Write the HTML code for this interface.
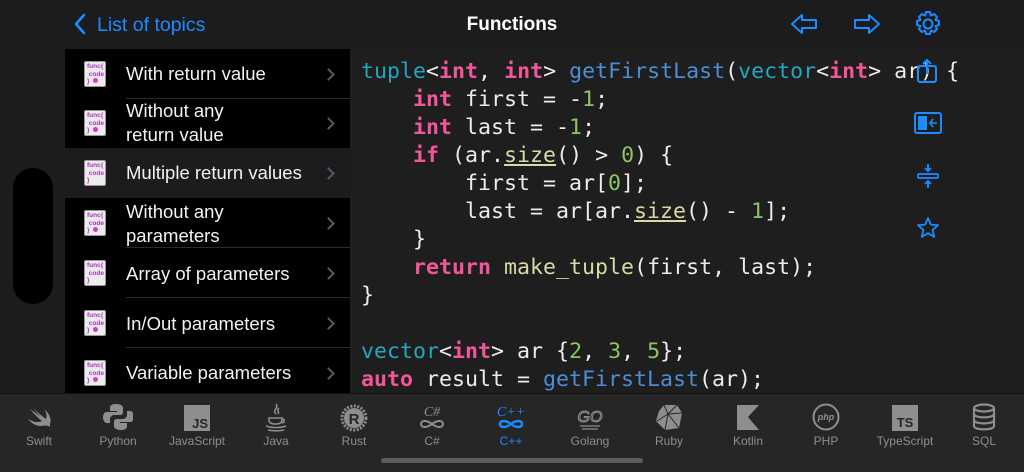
<!DOCTYPE html>
<html><head><meta charset="utf-8"><style>
*{margin:0;padding:0;box-sizing:border-box}
body{width:1024px;height:472px;overflow:hidden;background:#1c1c1e;font-family:"Liberation Sans",sans-serif;position:relative;color:#fff}
.top{position:absolute;left:0;top:0;width:1024px;height:49px;background:#1c1c1e}
.back{position:absolute;left:74px;top:14px;color:#1a8cff;font-size:19.5px}
.title{position:absolute;left:0;width:1024px;text-align:center;top:14px;font-size:19px;font-weight:bold;color:#fff}
.list{position:absolute;left:65px;top:49px;width:285px;height:344px;background:#000;overflow:hidden}
.row{position:absolute;left:0;width:285px;height:50px}
.row.sel{background:#1c1c1e}
.row .t{position:absolute;left:61px;font-size:18.5px;color:#f2f2f2;line-height:24px}
.row .sep{position:absolute;left:61px;right:0;bottom:0;height:1px;background:#2c2c2e}
.row .chev{position:absolute;right:17px;top:21px;width:9px;height:9px;border-right:2px solid #5a5a5e;border-top:2px solid #5a5a5e;transform:rotate(45deg)}
.ic{position:absolute;left:19px;top:12px;width:22px;height:26px;background:#ececec;border-radius:2px;border:1px solid #999;font-size:6.5px;line-height:7.5px;color:#b030c0;padding:1px 0 0 2px;font-weight:bold}
.ic i{display:inline-block;width:5px;height:5px;border-radius:50%;background:#d040c0;margin-left:3px}
.code{position:absolute;left:350px;top:49px;width:674px;height:344px;background:#1e1e1e}
pre{position:absolute;left:361px;top:58px;font-family:"DejaVu Sans Mono","Liberation Mono",monospace;font-size:21.6px;line-height:28px;color:#ececec}
.k{color:#f2569a;font-weight:bold}.ty{color:#22a6c0}.f{color:#4a8fd6}.n{color:#8cc664}.m{color:#d9d9a6}.u{color:#d9d9a6;text-decoration:underline}
.tab{position:absolute;left:0;top:393px;width:1024px;height:79px;background:#262626;border-top:1px solid #111}
.ti{position:absolute;top:40px;width:80px;margin-left:-40px;text-align:center;font-size:12px;color:#8e8e8e}
.ti.a{color:#1a8cff}
.tg{position:absolute;top:8px;width:30px;height:30px;margin-left:-15px}
.pill{position:absolute;left:13px;top:168px;width:40px;height:136px;background:#000;border-radius:20px}
.home{position:absolute;left:381px;top:458px;width:262px;height:5px;background:#5e5e5e;border-radius:3px}
</style></head><body>
<div class="top"></div>
<svg style="position:absolute;left:73px;top:13px" width="14" height="22"><path d="M11 2 L3 11 L11 20" stroke="#1a8cff" stroke-width="2.6" fill="none" stroke-linecap="round" stroke-linejoin="round"/></svg>
<div class="back" style="left:97px">List of topics</div>
<div class="title">Functions</div>
<svg style="position:absolute;left:790px;top:12px" width="28" height="24"><path d="M2 12 L12 3 L12 8 L26 8 L26 16 L12 16 L12 21 Z" stroke="#1a8cff" stroke-width="2" fill="none" stroke-linejoin="round"/></svg>
<svg style="position:absolute;left:853px;top:12px" width="28" height="24"><path d="M26 12 L16 3 L16 8 L2 8 L2 16 L16 16 L16 21 Z" stroke="#1a8cff" stroke-width="2" fill="none" stroke-linejoin="round"/></svg>
<svg style="position:absolute;left:914px;top:10px" width="28" height="28" viewBox="0 0 28 28"><g stroke="#1a8cff" stroke-width="2" fill="none"><circle cx="14" cy="14" r="4.5"/><path d="M12 2h4l1 3.5 3-1.5 3 3-1.5 3 3.5 1v4l-3.5 1 1.5 3-3 3-3-1.5-1 3.5h-4l-1-3.5-3 1.5-3-3 1.5-3-3.5-1v-4l3.5-1-1.5-3 3-3 3 1.5z" stroke-linejoin="round"/></g></svg>

<div class="list">
 <div class="row" style="top:0"><div class="ic">func{<br>&nbsp;code<br>}<i></i></div><div class="t" style="top:13px">With return value</div><div class="chev"></div><div class="sep"></div></div>
 <div class="row" style="top:49px"><div class="ic">func{<br>&nbsp;code<br>}<i></i></div><div class="t" style="top:1px">Without any<br>return value</div><div class="chev"></div></div>
 <div class="row sel" style="top:99px"><div class="ic">func{<br>&nbsp;code<br>}</div><div class="t" style="top:13px">Multiple return values</div><div class="chev"></div></div>
 <div class="row" style="top:149px"><div class="ic">func{<br>&nbsp;code<br>}<i></i></div><div class="t" style="top:2px">Without any<br>parameters</div><div class="chev"></div><div class="sep"></div></div>
 <div class="row" style="top:199px"><div class="ic">func{<br>&nbsp;code<br>}</div><div class="t" style="top:14px">Array of parameters</div><div class="chev"></div><div class="sep"></div></div>
 <div class="row" style="top:249px"><div class="ic">func{<br>&nbsp;code<br>}<i></i></div><div class="t" style="top:14px">In/Out parameters</div><div class="chev"></div><div class="sep"></div></div>
 <div class="row" style="top:299px"><div class="ic">func{<br>&nbsp;code<br>}<i></i></div><div class="t" style="top:13px">Variable parameters</div><div class="chev"></div></div>
</div>
<div class="pill"></div>
<div class="code"></div>
<pre><span class="ty">tuple</span>&lt;<span class="k">int</span>, <span class="k">int</span>&gt; <span class="f">getFirstLast</span>(<span class="ty">vector</span>&lt;<span class="k">int</span>&gt; ar) {
    <span class="k">int</span> first = -<span class="n">1</span>;
    <span class="k">int</span> last = -<span class="n">1</span>;
    <span class="k">if</span> (ar.<span class="u">size</span>() &gt; <span class="n">0</span>) {
        first = ar[<span class="n">0</span>];
        last = ar[ar.<span class="u">size</span>() - <span class="n">1</span>];
    }
    <span class="k">return</span> <span class="m">make_tuple</span>(first, last);
}

<span class="ty">vector</span>&lt;<span class="k">int</span>&gt; ar {<span class="n">2</span>, <span class="n">3</span>, <span class="n">5</span>};
<span class="k">auto</span> result = <span class="f">getFirstLast</span>(ar);</pre>
<svg style="position:absolute;left:914px;top:57px" width="28" height="28"><g stroke="#1a8cff" stroke-width="2" fill="none"><rect x="4" y="9" width="18" height="16" rx="2"/><path d="M13 17V3M9 7l4-4 4 4"/></g></svg>
<svg style="position:absolute;left:914px;top:111px" width="28" height="24"><rect x="1" y="2" width="26" height="20" rx="2" stroke="#1a8cff" stroke-width="2" fill="none"/><rect x="4" y="5" width="9" height="14" fill="#1a8cff"/><path d="M23 12h-7M19 8l-3 4 3 4" stroke="#1a8cff" stroke-width="1.6" fill="none"/></svg>
<svg style="position:absolute;left:916px;top:163px" width="24" height="26"><g stroke="#1a8cff" stroke-width="1.8" fill="none"><rect x="2" y="11" width="20" height="4" rx="1"/><path d="M12 1v7M9 5l3 3 3-3M12 25v-7M9 21l3-3 3 3"/></g></svg>
<svg style="position:absolute;left:916px;top:216px" width="24" height="24"><path d="M12 2l2.9 6.6 7.1.6-5.4 4.7 1.6 7L12 17.2 5.8 20.9l1.6-7L2 9.2l7.1-.6z" stroke="#1a8cff" stroke-width="1.8" fill="none" stroke-linejoin="round"/></svg>

<div class="tab">
 <svg class="tg" style="left:39px" viewBox="0 0 30 30"><path d="M26 22c2-5-1-11-6-15 3 4 3 8 2 10-4-3-9-7-13-11 3 4 6 7 8 9-3-2-8-6-11-8 4 5 9 10 12 12-4 2-9 1-14-2 3 4 8 7 13 7 3 0 5-1 7 0 1 0 2 1 2 1s0-2 0-3z" fill="#8e8e8e"/></svg>
 <div class="ti" style="left:39px">Swift</div>
 <svg class="tg" style="left:118px" viewBox="0 0 30 30"><path d="M15 2c-5 0-6 2-6 4v3h7v1H6c-3 0-4 3-4 5s1 6 4 6h3v-4c0-2 2-4 4-4h6c2 0 3-1 3-3V6c0-2-2-4-7-4z M20 28c5 0 6-2 6-4v-3h-7v-1h10c3 0 4-3 4-5s-1-6-4-6h-3v4c0 2-2 4-4 4h-6c-2 0-3 1-3 3v4c0 2 2 4 7 4z" fill="#8e8e8e" transform="translate(-2 0)"/></svg>
 <div class="ti" style="left:118px">Python</div>
 <svg class="tg" style="left:197px" viewBox="0 0 30 30"><rect x="2" y="3" width="26" height="26" fill="#8e8e8e"/><text x="26" y="26" text-anchor="end" font-family="Liberation Sans" font-weight="bold" font-size="13" fill="#262626">JS</text></svg>
 <div class="ti" style="left:197px">JavaScript</div>
 <svg class="tg" style="left:276px" viewBox="0 0 30 30"><g stroke="#8e8e8e" stroke-width="1.6" fill="none"><path d="M15 2c3 4-4 6 0 10M18 6c-3 2 1 4-1 6"/><path d="M8 16h13v2c0 3-3 4-6.5 4S8 21 8 18z"/><path d="M21 17c3 0 3 3 0 4"/><path d="M5 24c5 2 15 2 20 0M7 28c5 1 11 1 16 0"/></g></svg>
 <div class="ti" style="left:276px">Java</div>
 <svg class="tg" style="left:354px" viewBox="0 0 30 30"><circle cx="15" cy="16" r="12" fill="none" stroke="#8e8e8e" stroke-width="3" stroke-dasharray="2 1.5"/><circle cx="15" cy="16" r="10" fill="#8e8e8e"/><text x="15" y="22" text-anchor="middle" font-family="Liberation Sans" font-weight="bold" font-size="15" fill="#262626">R</text></svg>
 <div class="ti" style="left:354px">Rust</div>
 <svg class="tg" style="left:432px" viewBox="0 0 30 30"><text x="15" y="14" text-anchor="middle" font-family="Liberation Serif" font-style="italic" font-size="14" fill="#8e8e8e">C#</text><path d="M4 22c0-4 6-4 11 0s11 4 11 0-6-4-11 0-11 4-11 0z" stroke="#8e8e8e" stroke-width="2" fill="none"/></svg>
 <div class="ti" style="left:432px">C#</div>
 <svg class="tg" style="left:511px" viewBox="0 0 30 30"><text x="15" y="14" text-anchor="middle" font-family="Liberation Serif" font-style="italic" font-size="14" fill="#1a8cff">C++</text><path d="M4 22c0-4 6-4 11 0s11 4 11 0-6-4-11 0-11 4-11 0z" stroke="#1a8cff" stroke-width="2.4" fill="none"/></svg>
 <div class="ti a" style="left:511px">C++</div>
 <svg class="tg" style="left:590px" viewBox="0 0 30 30"><text x="15" y="20" text-anchor="middle" font-family="Liberation Sans" font-style="italic" font-size="16" fill="none" stroke="#8e8e8e" stroke-width="1">GO</text><path d="M5 24h20M7 27h16" stroke="#8e8e8e" stroke-width="1.2"/></svg>
 <div class="ti" style="left:590px">Golang</div>
 <svg class="tg" style="left:669px" viewBox="0 0 30 30"><path d="M10 3h13l5 8-3 15-14 2-9-9 3-10z" fill="#8e8e8e"/><path d="M10 3l4 9 9-9M14 12l-11 7M14 12l11 14M14 12l-3 16M14 12l14-1" stroke="#262626" stroke-width="1" fill="none"/></svg>
 <div class="ti" style="left:669px">Ruby</div>
 <svg class="tg" style="left:748px" viewBox="0 0 30 30"><path d="M4 3h22L15 15l11 13H4z" fill="#8e8e8e"/></svg>
 <div class="ti" style="left:748px">Kotlin</div>
 <svg class="tg" style="left:826px" viewBox="0 0 30 30"><circle cx="15" cy="15" r="12.5" stroke="#8e8e8e" stroke-width="2" fill="none"/><text x="15" y="18" text-anchor="middle" font-family="Liberation Sans" font-style="italic" font-weight="bold" font-size="9" fill="#8e8e8e">php</text></svg>
 <div class="ti" style="left:826px">PHP</div>
 <svg class="tg" style="left:905px" viewBox="0 0 30 30"><rect x="2" y="3" width="26" height="26" fill="#8e8e8e"/><text x="15" y="25" text-anchor="middle" font-family="Liberation Sans" font-weight="bold" font-size="13" fill="#262626">TS</text></svg>
 <div class="ti" style="left:905px">TypeScript</div>
 <svg class="tg" style="left:984px" viewBox="0 0 30 30"><g stroke="#8e8e8e" stroke-width="2.2" fill="none"><ellipse cx="15" cy="6" rx="10" ry="3.5"/><path d="M5 6v18c0 4.5 20 4.5 20 0V6M5 12c0 4.5 20 4.5 20 0M5 18c0 4.5 20 4.5 20 0"/></g></svg>
 <div class="ti" style="left:984px">SQL</div>
</div>
<div class="home"></div>
</body></html>
